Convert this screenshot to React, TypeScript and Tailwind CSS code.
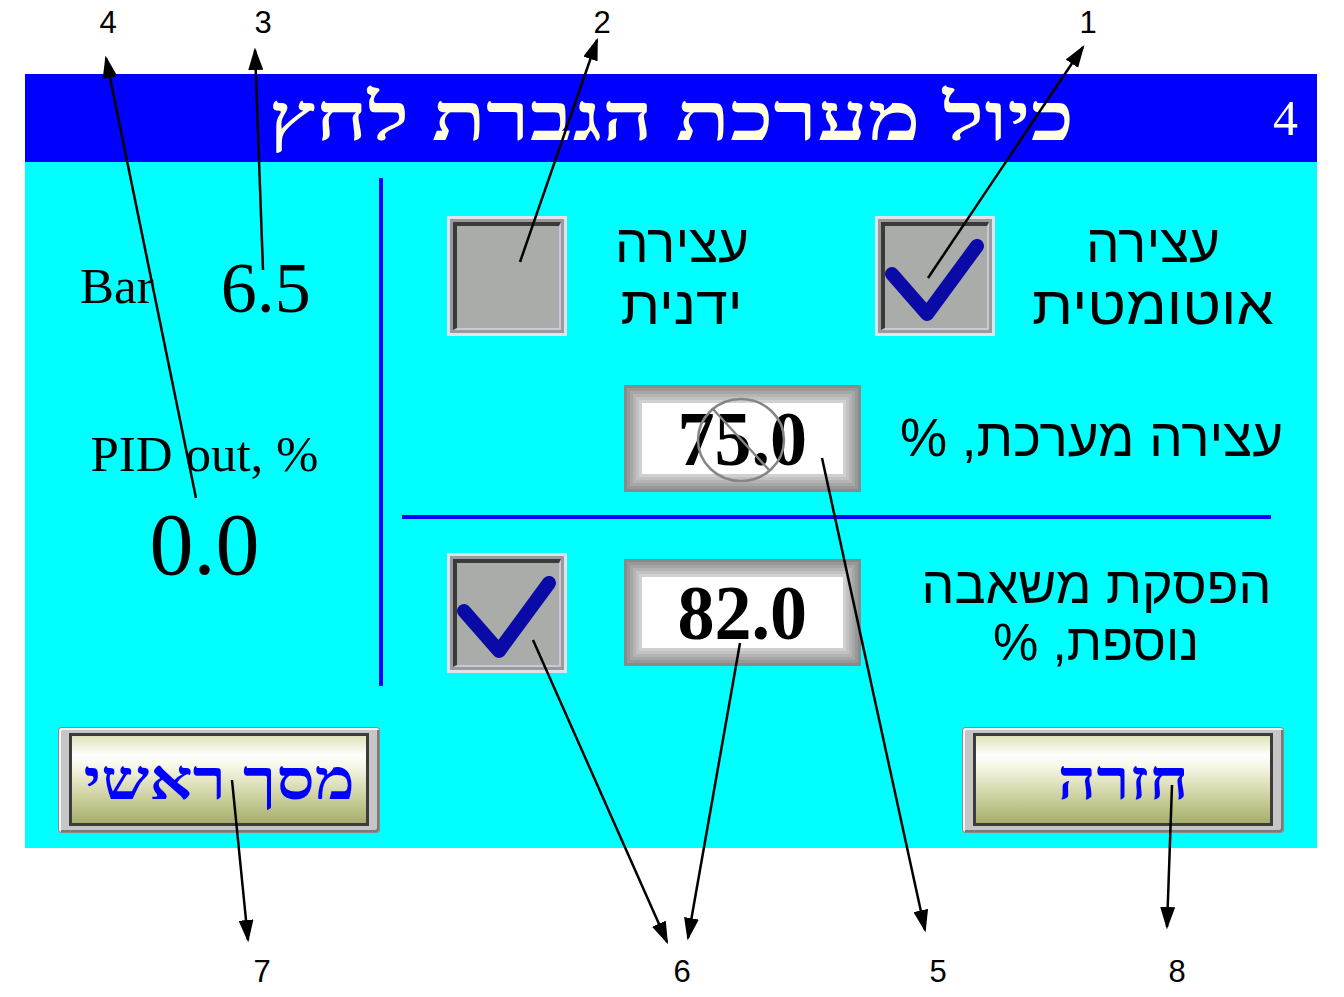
import React from "react";

const serif = "font-['Liberation_Serif','DejaVu_Serif',serif]";
const sans = "font-['Liberation_Sans','DejaVu_Sans',sans-serif]";

function CheckBox({ checked }: { checked?: boolean }) {
  return (
    <div className="relative w-[120px] h-[120px] shrink-0 bg-[#e2e2ec] p-[3px]">
      <div className="w-full h-full bg-[#9a9a9a] p-[3px]">
        <div className="w-full h-full bg-[#a9aca9] border-t-[4px] border-l-[4px] border-b-[2px] border-r-[2px] border-t-[#3a3a3a] border-l-[#3a3a3a] border-b-[#c8c8d8] border-r-[#c8c8d8]" />
      </div>
      {checked && (
        <svg className="absolute inset-0" width="120" height="120" viewBox="0 0 120 120">
          <polyline
            points="17,58 52,98 102,30"
            fill="none"
            stroke="#0a0aa6"
            strokeWidth="14"
            strokeLinecap="round"
            strokeLinejoin="round"
          />
        </svg>
      )}
    </div>
  );
}

function NumBox({ value, blocked }: { value: string; blocked?: boolean }) {
  return (
    <div className="relative w-[237px] h-[107px] shrink-0 bg-[#d0d0d0] p-[18px] shadow-[inset_0_0_0_3px_#8a8a8a,inset_0_0_0_6px_#989898,inset_0_0_0_9px_#a6a6a6,inset_0_0_0_12px_#b4b4b4,inset_0_0_0_15px_#c2c2c2]">
      <div className={`w-full h-full bg-white flex items-center justify-center ${serif} font-bold text-[78px] leading-none text-black`}>
        <span className="inline-block scale-x-[0.95]">{value}</span>
      </div>
      {blocked && (
        <svg className="absolute inset-0" width="237" height="107" viewBox="0 0 237 107">
          <ellipse cx="117" cy="55" rx="43" ry="41" fill="none" stroke="#858585" strokeWidth="2.5" />
          <line x1="88" y1="23" x2="146" y2="86" stroke="#858585" strokeWidth="2.5" />
        </svg>
      )}
    </div>
  );
}

function Btn({ label }: { label: string }) {
  return (
    <div className="w-[322px] h-[106px] rounded-[3px] border border-[#8a8a8a] bg-[#c6c6c6] pt-[5px] pb-[6px] px-[10px] shadow-[inset_2px_2px_0_#f2f2f2,inset_-2px_-2px_0_#7a7a7a]">
      <div className="w-full h-full border-[3px] border-[#3c3c3c] bg-[linear-gradient(to_bottom,#dfe2b8_0%,#ffffff_22%,#f6f6e6_35%,#cdd19e_70%,#a7ad6c_100%)] flex items-center justify-center">
        <span className={`inline-block scale-x-[1.21] ${serif} font-bold text-[56px] text-[#0000ff] leading-none`} dir="rtl">
          {label}
        </span>
      </div>
    </div>
  );
}

const arrows: [number, number, number, number][] = [
  [928, 278, 1083, 47],
  [520, 262, 597, 40],
  [263, 270, 255, 50],
  [196, 498, 106, 58],
  [822, 458, 925, 930],
  [533, 640, 667, 942],
  [740, 643, 688, 938],
  [232, 780, 248, 940],
  [1172, 785, 1167, 927],
];

const labels: [string, number, number][] = [
  ["4", 108, 33],
  ["3", 263, 33],
  ["2", 602, 33],
  ["1", 1088, 33],
  ["7", 262, 982],
  ["6", 682, 982],
  ["5", 938, 982],
  ["8", 1177, 982],
];

export default function App() {
  return (
    <div className="relative w-[1344px] h-[997px] bg-white overflow-hidden">
      <div className="pt-[74px] pl-[25px]">
        <div className="w-[1292px] h-[774px] bg-[#00ffff] flex flex-col">
          {/* title bar */}
          <div className="h-[88px] bg-[#0000ff] flex items-center">
            <div className="w-[70px]" />
            <div className="flex-1 text-center">
              <span
                className={`inline-block scale-x-[1.35] ${serif} font-bold text-[66px] leading-none text-[#ffffe0]`}
                dir="rtl"
              >
                כיול מערכת הגברת לחץ
              </span>
            </div>
            <div className={`w-[70px] text-right pr-[19px] ${serif} text-[50px] leading-none text-white`}>4</div>
          </div>

          {/* body */}
          <div className="flex h-[538px]">
            {/* left column */}
            <div className={`w-[354px] flex flex-col ${serif} text-black`}>
              <div className="mt-[90px] pl-[55px] flex items-start">
                <span className="mt-[9px] text-[51px] leading-none">Bar</span>
                <span className="ml-[67px] text-[72px] leading-none">6.5</span>
              </div>
              <div className="mt-[105px] pl-[5px] text-center text-[51px] leading-none">PID out, %</div>
              <div className="mt-[21px] pl-[5px] text-center text-[88px] leading-none">0.0</div>
            </div>

            <div className="w-[4px] mt-[16px] h-[508px] bg-[#0000ff]" />

            {/* right area */}
            <div className={`flex-1 flex flex-col pt-[54px] ${sans} text-black`}>
              <div className="flex items-start">
                <div className="ml-[64px]">
                  <CheckBox />
                </div>
                <div className="ml-[33px] w-[164px] mt-[-3px] text-center text-[53px] leading-[62px]" dir="rtl">
                  עצירה
                  <br />
                  <span className="inline-block scale-x-[1.08]">ידנית</span>
                </div>
                <div className="ml-[111px]">
                  <CheckBox checked />
                </div>
                <div className="ml-[15px] w-[286px] mt-[-3px] text-center text-[53px] leading-[62px]" dir="rtl">
                  עצירה
                  <br />
                  <span className="inline-block scale-x-[1.12]">אוטומטית</span>
                </div>
              </div>

              <div className="mt-[48px] flex items-start">
                <div className="ml-[241px]">
                  <NumBox value="75.0" blocked />
                </div>
                <div className="ml-[39px] mt-[22px] whitespace-nowrap text-[53px] leading-[62px]" dir="rtl">
                  עצירה מערכת, %
                </div>
              </div>

              <div className="mt-[23px] ml-[19px] w-[869px] h-[4px] bg-[#0000ff]" />

              <div className="mt-[34px] flex items-start">
                <div className="ml-[64px]">
                  <CheckBox checked />
                </div>
                <div className="ml-[57px] mt-[6px]">
                  <NumBox value="82.0" />
                </div>
                <div className="ml-[40px] w-[390px] mt-[4px] text-center text-[51px] leading-[57px]" dir="rtl">
                  <span className="inline-block scale-x-[1.02]">הפסקת משאבה</span>
                  <br />
                  נוספת, %
                </div>
              </div>
            </div>
          </div>

          {/* buttons */}
          <div className="flex justify-between px-[33px] pt-[27px]">
            <Btn label="מסך ראשי" />
            <Btn label="חזרה" />
          </div>
        </div>
      </div>

      {/* annotation callouts */}
      <svg className="absolute inset-0 pointer-events-none" width="1344" height="997" viewBox="0 0 1344 997">
        <defs>
          <marker id="ah" markerWidth="9" markerHeight="6" refX="8" refY="3" orient="auto" markerUnits="strokeWidth">
            <polygon points="0 0, 9 3, 0 6" fill="black" />
          </marker>
        </defs>
        {arrows.map(([x1, y1, x2, y2], i) => (
          <line key={i} x1={x1} y1={y1} x2={x2} y2={y2} stroke="black" strokeWidth="2.5" markerEnd="url(#ah)" />
        ))}
        {labels.map(([t, x, y]) => (
          <text key={t} x={x} y={y} textAnchor="middle" fontFamily="Liberation Sans, Arial, sans-serif" fontSize="31" fill="black">
            {t}
          </text>
        ))}
      </svg>
    </div>
  );
}
